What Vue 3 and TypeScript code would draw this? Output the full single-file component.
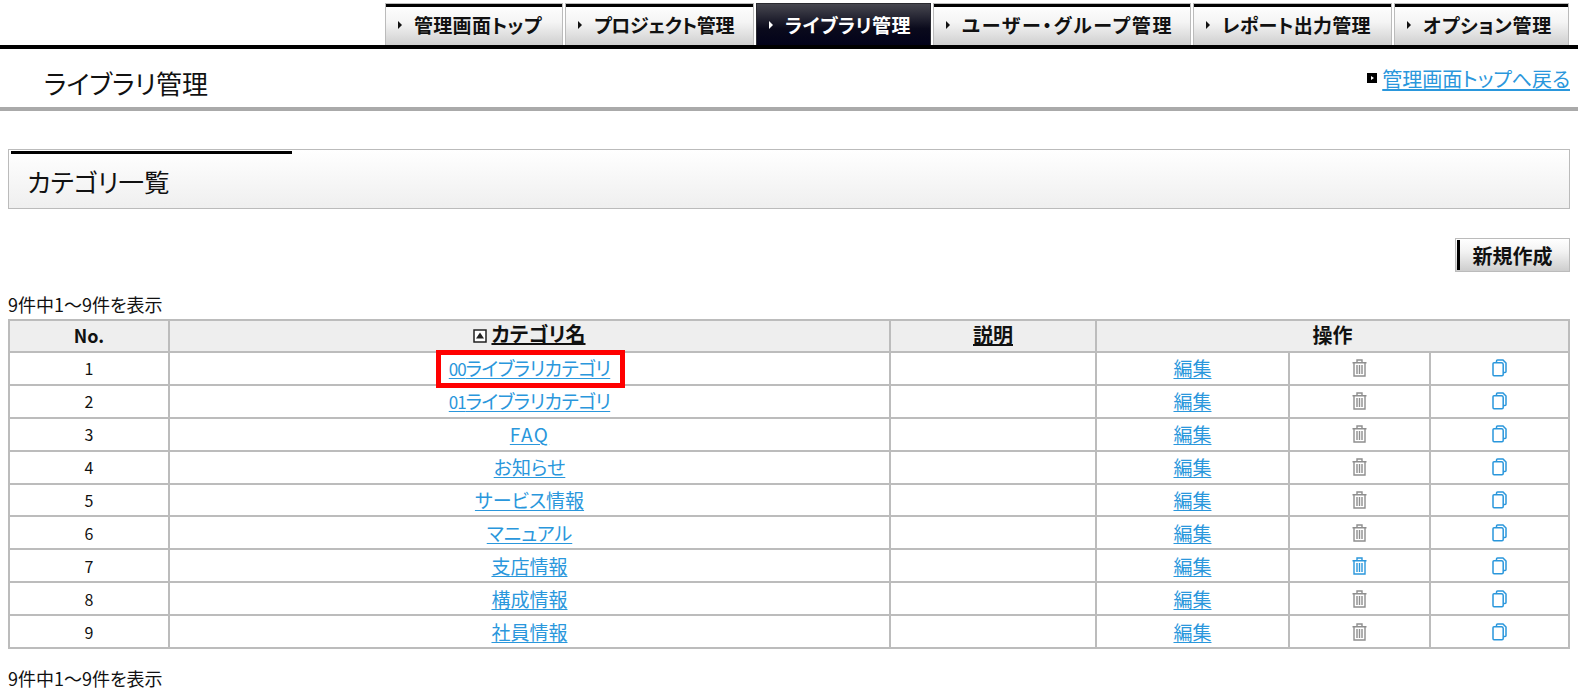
<script setup lang="ts">
interface Row { no: number; prefix?: string; name: string; hot?: boolean; mark?: boolean; wide?: boolean }
const tabs = [
  { label: '管理画面トップ', w: 178, ls: 0.3 },
  { label: 'プロジェクト管理', w: 189, ls: -0.4 },
  { label: 'ライブラリ管理', w: 175, ls: 0.3 },
  { label: 'ユーザー・グループ管理', w: 258, ls: 1.7 },
  { label: 'レポート出力管理', w: 199, ls: 0.3 },
  { label: 'オプション管理', w: 175, ls: 0.7 },
]
const rows: Row[] = [
  { no: 1, prefix: '00', name: 'ライブラリカテゴリ', mark: true },
  { no: 2, prefix: '01', name: 'ライブラリカテゴリ' },
  { no: 3, name: 'FAQ', wide: true },
  { no: 4, name: 'お知らせ' },
  { no: 5, name: 'サービス情報' },
  { no: 6, name: 'マニュアル' },
  { no: 7, name: '支店情報', hot: true },
  { no: 8, name: '構成情報' },
  { no: 9, name: '社員情報' },
]
</script>

<template>
  <div class="page">
    <nav class="tabs">
      <a
        v-for="t in tabs"
        :key="t.label"
        class="tab"
        :class="{ active: t.label === 'ライブラリ管理' }"
        :style="{ width: t.w + 'px', letterSpacing: t.ls + 'px' }"
      >
        <i class="caret"></i>{{ t.label }}
      </a>
    </nav>

    <header class="pagehead">
      <h1>ライブラリ管理</h1>
      <span class="back"><i class="backmark"></i><a class="link">管理画面トップへ戻る</a></span>
    </header>

    <section class="section">
      <h2>カテゴリ一覧</h2>
    </section>

    <div class="actions">
      <button class="btn" type="button"><i class="btnmark"></i>新規作成</button>
    </div>

    <p class="count first">9件中1～9件を表示</p>
    <table class="grid">
      <colgroup>
        <col style="width: 160px" />
        <col style="width: 721px" />
        <col style="width: 206px" />
        <col style="width: 193px" />
        <col style="width: 141px" />
        <col />
      </colgroup>
      <thead>
        <tr>
          <th class="nohead">No.</th>
          <th>
            <span class="sort"><svg width="14" height="14" viewBox="0 0 14 14"><rect x="1" y="1" width="12" height="12" fill="#fff" stroke="#222" stroke-width="1.5" /><path d="M7 3.5 L11 9.5 H3 Z" fill="#222" /></svg></span>
            <u>カテゴリ名</u>
          </th>
          <th><u>説明</u></th>
          <th colspan="3">操作</th>
        </tr>
      </thead>
      <tbody>
        <tr v-for="r in rows" :key="r.no">
          <td class="no">{{ r.no }}</td>
          <td>
            <a class="link" :class="{ mark: r.mark, wide: r.wide, tight: r.prefix }"><span v-if="r.prefix" class="num">{{ r.prefix }}</span>{{ r.name }}</a>
          </td>
          <td></td>
          <td><a class="link">編集</a></td>
          <td>
            <svg class="ico" :class="{ hot: r.hot }" width="15" height="18" viewBox="0 0 15 18" fill="none" stroke="currentColor" stroke-width="1.4">
              <path d="M0.5 3.7 H14.5 M5 3.7 V1 H10 V3.7 M2 3.7 V17 H13 V3.7 M5 6 V15 M7.5 6 V15 M10 6 V15" />
            </svg>
          </td>
          <td>
            <svg class="ico copy" width="15" height="18" viewBox="0 0 15 18" fill="none" stroke="currentColor" stroke-width="1.5">
              <path d="M4.5 3.5 V2 Q4.5 1 5.5 1 H11 L14 4 V12.5 Q14 13.5 13 13.5 H11.5" />
              <path d="M2 3.7 H9.5 Q11.2 3.7 11.2 5.4 V15.5 Q11.2 16.7 10 16.7 H2 Q1 16.7 1 15.5 V4.7 Q1 3.7 2 3.7 Z" />
            </svg>
          </td>
        </tr>
      </tbody>
    </table>
    <p class="count last">9件中1～9件を表示</p>
  </div>
</template>

<style>
html, body { margin: 0; background: #fff; }
</style>

<style scoped>
.page {
  font-family: "Noto Sans CJK JP", "Noto Sans", sans-serif;
  font-feature-settings: "palt";
  color: #111;
  height: 692px;
  overflow: hidden;
}
.tabs {
  display: flex;
  justify-content: flex-end;
  gap: 2px;
  height: 42px;
  padding: 3px 9px 0 0;
  border-bottom: 4px solid #000;
  box-sizing: content-box;
}
.tab {
  display: flex;
  align-items: center;
  box-sizing: border-box;
  padding-left: 12px;
  border: 1px solid #bbb;
  border-bottom: 0;
  box-shadow: inset 0 3px 0 #000;
  background: linear-gradient(#fff, #f4f4f4 45%, #cfcfcf);
  font-size: 19px;
  font-weight: 700;
  white-space: nowrap;
}
.tab.active {
  background: linear-gradient(#47474f, #0a0a1c 60%, #02021a);
  box-shadow: none;
  border-color: #2a2a30;
  color: #fff;
}
.caret {
  width: 0;
  height: 0;
  margin-right: 12px;
  border-left: 4px solid currentColor;
  border-top: 4px solid transparent;
  border-bottom: 4px solid transparent;
}
.pagehead {
  display: flex;
  align-items: center;
  justify-content: space-between;
  height: 58px;
  padding: 0 8px 0 44px;
  border-bottom: 4px solid #aaa;
}
.pagehead h1 {
  margin: 0;
  font-size: 26px;
  font-weight: 400;
  position: relative;
  top: 4px;
}
.back {
  display: flex;
  align-items: center;
  font-size: 20px;
}
.backmark {
  position: relative;
  box-sizing: border-box;
  width: 10px;
  height: 10px;
  margin-right: 5px;
  background: #000;
}
.backmark::after {
  content: "";
  position: absolute;
  left: 4px;
  top: 3px;
  border-left: 3px solid #fff;
  border-top: 2px solid transparent;
  border-bottom: 2px solid transparent;
}
.link {
  color: #2a97dc;
  text-decoration: underline;
  text-underline-offset: 2px;
}
.section {
  position: relative;
  box-sizing: border-box;
  height: 60px;
  margin: 38px 8px 0;
  padding-left: 18px;
  border: 1px solid #bbb;
  background: linear-gradient(#fff, #efefef);
  display: flex;
  align-items: center;
}
.section::before {
  content: "";
  position: absolute;
  left: 2px;
  top: 1px;
  width: 281px;
  height: 3px;
  background: #000;
}
.section h2 {
  margin: 2px 0 0;
  font-size: 25.5px;
  font-weight: 400;
}
.actions {
  display: flex;
  justify-content: flex-end;
  margin: 29px 8px 0;
}
.btn {
  position: relative;
  box-sizing: border-box;
  width: 115px;
  height: 34px;
  padding: 0;
  border: 1px solid #bbb;
  background: linear-gradient(#fff, #f2f2f2 40%, #cdcdcd);
  font: 700 20px "Noto Sans CJK JP", sans-serif;
  color: #111;
}
.btnmark {
  position: absolute;
  left: 1px;
  top: 1px;
  bottom: 1px;
  width: 3px;
  background: #000;
}
.count {
  margin: 0 8px;
  font-size: 18px;
  line-height: 20px;
  color: #111;
}
.count.first { margin-top: 22px; }
.count.last { margin-top: 19px; }
.grid {
  box-sizing: border-box;
  width: 1562px;
  margin: 5px 8px 0;
  border-collapse: collapse;
  table-layout: fixed;
}
.grid th, .grid td {
  border: 2px solid #bcbcbc;
  padding: 0;
  text-align: center;
  height: 30.9px;
  font-size: 19px;
  line-height: 20px;
  vertical-align: middle;
}
.grid th {
  box-sizing: border-box;
  background: #eee;
  font-weight: 700;
  font-size: 20px;
  height: 32px;
  padding-bottom: 3px;
}
.grid th.nohead { font-size: 18px; }
.grid td.no { font-size: 16px; }
.sort { margin-right: 4px; vertical-align: -1px; }
.ico { display: block; margin: 0 auto; color: #8e8e8e; }
.ico.hot, .ico.copy { color: #2a97dc; }
.num { font-size: 17px; letter-spacing: -1px; }
.tight { letter-spacing: -0.6px; }
.wide { letter-spacing: 1.4px; }
.mark { position: relative; }
.mark::after {
  content: "";
  position: absolute;
  left: -13px;
  right: -15px;
  top: -4px;
  bottom: -7px;
  border: 5px solid #f00;
}
</style>
